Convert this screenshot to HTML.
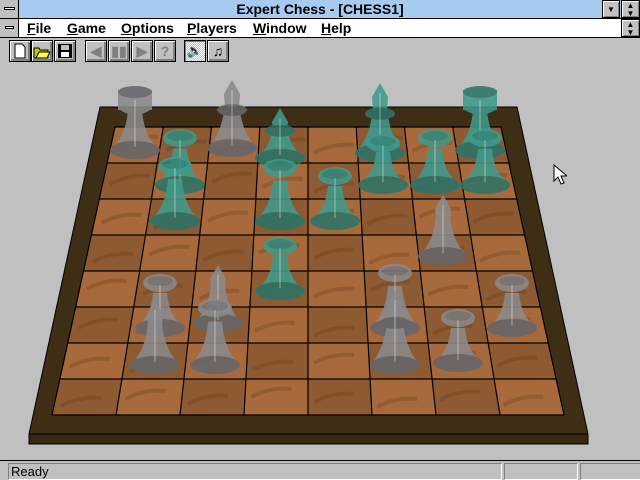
<!DOCTYPE html>
<html><head><meta charset="utf-8"><style>
*{margin:0;padding:0;box-sizing:border-box}
body{width:640px;height:480px;background:#c0c0c0;position:relative;overflow:hidden;font-family:"Liberation Sans",sans-serif}
.abs{position:absolute}
#title{left:0;top:0;width:640px;height:19px;background:#a6caf0;border-bottom:1px solid #000}
#title .t{position:absolute;left:0;right:0;top:1px;text-align:center;font-size:14px;font-weight:bold;color:#000}
.sys{background:#c0c0c0;border-right:1px solid #000}
.bar{position:absolute;left:4px;width:11px;height:3px;background:#fff;border:1px solid #000;top:7px}
.btn{background:#c0c0c0;border:1px solid #000;box-shadow:inset 1px 1px #fff,inset -1px -1px #808080}
#menu{left:0;top:19px;width:640px;height:19px;background:#fff;border-bottom:1px solid #000}
#menu span{position:absolute;top:1px;font-size:14px;font-weight:bold}
#menu u{text-decoration:underline}
.tb{position:absolute;top:40px;height:22px;width:22px;background:#c0c0c0;border:1px solid #000;box-shadow:inset 1px 1px #fff,inset -2px -2px #808080;font-size:14px;text-align:center;line-height:20px;color:#808080;font-weight:bold}
#status{left:0;top:460px;width:640px;height:20px;border-top:1px solid #000;background:#c0c0c0}
.pan{position:absolute;top:2px;height:17px;border:1px solid;border-color:#808080 #fff #fff #808080;font-size:13px;padding-left:2px;line-height:15px}
</style></head><body>
<div id="title" class="abs">
 <div class="abs sys" style="left:0;top:0;width:19px;height:18px"><div class="bar"></div></div>
 <div class="t">Expert Chess - [CHESS1]</div>
 <div class="abs btn" style="left:602px;top:0;width:18px;height:18px;font-size:8px;text-align:center;line-height:17px">▼</div>
 <div class="abs btn" style="left:621px;top:0;width:19px;height:18px;font-size:8px;text-align:center;line-height:8px;padding-top:1px">▲<br>▼</div>
</div>
<div id="menu" class="abs">
 <div class="abs sys" style="left:0;top:0;width:19px;height:18px"><div class="bar" style="left:5px;width:9px"></div></div>
 <span style="left:27px"><u>F</u>ile</span>
 <span style="left:67px"><u>G</u>ame</span>
 <span style="left:121px"><u>O</u>ptions</span>
 <span style="left:187px"><u>P</u>layers</span>
 <span style="left:253px"><u>W</u>indow</span>
 <span style="left:321px"><u>H</u>elp</span>
 <div class="abs btn" style="left:621px;top:0;width:19px;height:18px;font-size:8px;text-align:center;line-height:8px;padding-top:1px">▲<br>▼</div>
</div>
<div class="tb" style="left:9px"><svg width="14" height="16" style="margin-top:2px"><path d="M2 1h7l3 3v11H2z" fill="#fff" stroke="#000"/></svg></div>
<div class="tb" style="left:31px"><svg width="18" height="16" style="margin-top:2px"><path d="M1 5h5l1 2h8v8H1z" fill="#c8c800" stroke="#000"/><path d="M3 15l3-6h11l-3 6z" fill="#ffff40" stroke="#000"/></svg></div>
<div class="tb" style="left:54px"><svg width="16" height="16" style="margin-top:2px"><rect x="1" y="1" width="14" height="14" fill="#000"/><rect x="4" y="2" width="8" height="5" fill="#c0c0c0"/><rect x="4" y="9" width="8" height="5" fill="#fff"/></svg></div>
<div class="tb" style="left:85px">◀</div>
<div class="tb" style="left:108px">▮▮</div>
<div class="tb" style="left:131px">▶</div>
<div class="tb" style="left:154px">?</div>
<div class="tb" style="left:184px;background:repeating-conic-gradient(#c0c0c0 0 25%,#fff 0 50%) 0 0/2px 2px;box-shadow:inset 1px 1px #808080;color:#000;font-size:13px">🔈</div>
<div class="tb" style="left:207px;color:#000;font-weight:normal">♫</div>

<svg class="abs" style="left:0;top:63px" width="640" height="397" viewBox="0 63 640 397" id="bd">
 <polygon points="29,434 588,434 588,444 29,444" fill="#35290f" stroke="#000"/>
 <polygon points="100,107 517,107 588,434 29,434" fill="#3e2e16" stroke="#000"/>
 <g id="sq"></g>
 <g id="pc"></g>
</svg>
<div id="status" class="abs">
 <div class="pan" style="left:8px;width:494px">Ready</div>
 <div class="pan" style="left:504px;width:74px"></div>
 <div class="pan" style="left:580px;width:62px"></div>
</div>
<script>
var sq=document.getElementById('sq'),pc=document.getElementById('pc');
function X(y,t){var l=115+(52-115)*(y-127)/288,r=501+(564-501)*(y-127)/288;return l+(r-l)*t;}
var s='';
for(var r=0;r<8;r++)for(var c=0;c<8;c++){var y0=127+36*r,y1=y0+36;
 var col=((r+c)%2==0)?'#a86a3c':'#8e5a32';
 s+='<polygon points="'+X(y0,c/8)+','+y0+' '+X(y0,(c+1)/8)+','+y0+' '+X(y1,(c+1)/8)+','+y1+' '+X(y1,c/8)+','+y1+'" fill="'+col+'"/>';
 var yy=y0+12+((r*3+c*5)%12);s+='<path d="M'+(X(yy,c/8)+6)+' '+(yy+6)+' q18 -10 40 -8" stroke="#6a3e1c" stroke-width="4" fill="none" opacity="0.35"/>';
}
for(var r=0;r<=8;r++){var y=127+36*r;s+='<line x1="'+X(y,0)+'" y1="'+y+'" x2="'+X(y,1)+'" y2="'+y+'" stroke="#000" stroke-width="1.2"/>';}
for(var c=0;c<=8;c++){s+='<line x1="'+X(127,c/8)+'" y1="127" x2="'+X(415,c/8)+'" y2="415" stroke="#000" stroke-width="1.2"/>';}
sq.innerHTML=s;
function piece(cx,top,base,teal,type){
 var f=teal?'#3f9a8c':'#8a8a8c',d=teal?'#2c7468':'#66666a',h=base-top,p='';
 var bw=25;
 p+='<path d="M'+(cx-bw)+' '+(base-7)+' Q'+(cx-9)+' '+(base-h*0.3)+' '+(cx-7)+' '+(top+h*0.3)+' L'+(cx+7)+' '+(top+h*0.3)+' Q'+(cx+9)+' '+(base-h*0.3)+' '+(cx+bw)+' '+(base-7)+' Z" fill="'+f+'"/>';
 p+='<ellipse cx="'+cx+'" cy="'+(base-7)+'" rx="'+bw+'" ry="9" fill="'+d+'"/>';
 if(type=='p'){p+='<ellipse cx="'+cx+'" cy="'+(top+8)+'" rx="17" ry="9" fill="'+f+'"/><ellipse cx="'+cx+'" cy="'+(top+6)+'" rx="13" ry="5" fill="'+d+'" opacity=".5"/>';}
 if(type=='r'){p+='<path d="M'+(cx-17)+' '+(top+20)+' L'+(cx-17)+' '+top+' L'+(cx+17)+' '+top+' L'+(cx+17)+' '+(top+20)+' Z" fill="'+f+'"/><ellipse cx="'+cx+'" cy="'+(top+2)+'" rx="17" ry="6" fill="'+d+'"/><path d="M'+(cx-15)+' '+(top+20)+' Q'+cx+' '+(top+30)+' '+(cx+15)+' '+(top+20)+'" fill="'+f+'"/>';}
 if(type=='b'||type=='k'||type=='q'){p+='<path d="M'+(cx-7)+' '+(top+h*0.35)+' L'+(cx-8)+' '+(top+14)+' L'+cx+' '+top+' L'+(cx+8)+' '+(top+14)+' L'+(cx+7)+' '+(top+h*0.35)+' Z" fill="'+f+'"/>';
  if(type!='b')p+='<ellipse cx="'+cx+'" cy="'+(top+h*0.4)+'" rx="15" ry="6" fill="'+d+'"/>';}
 p+='<line x1="'+cx+'" y1="'+(top+10)+'" x2="'+cx+'" y2="'+(base-10)+'" stroke="#fff" stroke-opacity=".25" stroke-width="2"/>';
 return '<g opacity="0.88">'+p+'</g>';
}
var P=[
[135,90,157,0,'r'],[232,80,155,0,'k'],[480,90,157,1,'r'],[380,83,160,1,'q'],[280,108,165,1,'k'],
[180,130,192,1,'p'],[383,135,192,1,'p'],[435,130,192,1,'p'],[485,130,192,1,'p'],
[175,158,228,1,'p'],[280,160,228,1,'p'],[335,168,228,1,'p'],
[443,195,263,0,'b'],[280,238,298,1,'p'],
[160,275,335,0,'p'],[218,265,330,0,'b'],[395,265,335,0,'p'],[512,275,335,0,'p'],
[155,300,372,0,'b'],[215,300,372,0,'p'],[395,290,372,0,'k'],[458,310,370,0,'p']];
var o='';P.forEach(function(a){o+=piece(a[0],a[1],a[2],a[3],a[4]);});pc.innerHTML=o;
</script>
<svg class="abs" style="left:553px;top:164px" width="14" height="22"><path d="M1 1v16l4-4 3 7 3-1-3-7h6z" fill="#fff" stroke="#000"/></svg>
</body></html>
